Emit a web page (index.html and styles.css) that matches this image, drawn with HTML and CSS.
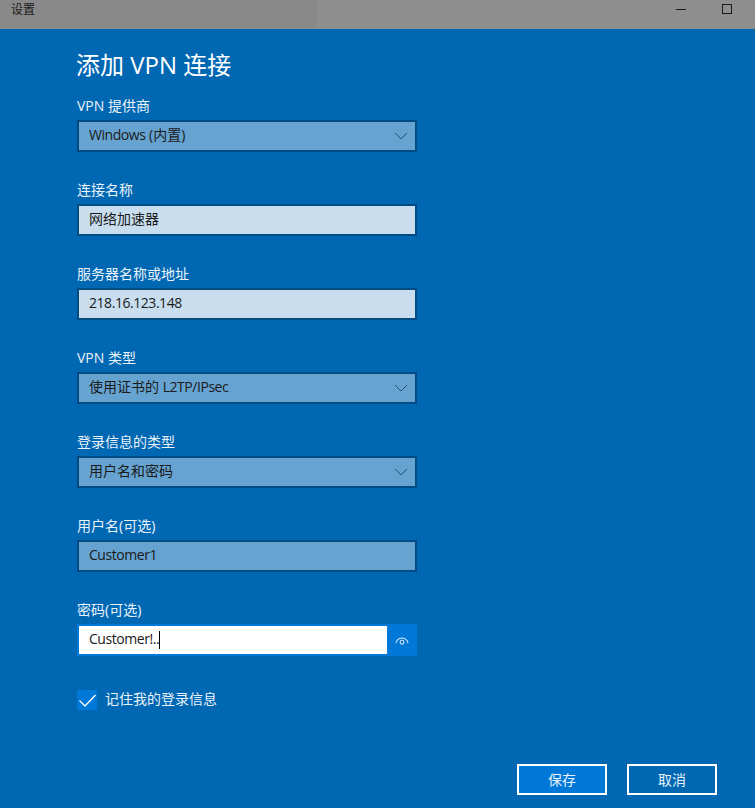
FILE: index.html
```html
<!DOCTYPE html>
<html lang="zh-CN">
<head>
<meta charset="utf-8">
<title>设置</title>
<link rel="stylesheet" href="styles.css">
</head>
<body>
<div class="window">
  <header class="titlebar">
    <div class="titlebar-left">设置</div>
    <div class="titlebar-controls">
      <span class="ctl"><svg width="10" height="10" viewBox="0 0 10 10"><path d="M0 5.500h10" stroke="#1a1a1a" stroke-width="1" fill="none"/></svg></span>
      <span class="ctl"><svg width="10" height="10" viewBox="0 0 10 10"><rect x=".5" y=".5" width="9" height="9" stroke="#1a1a1a" stroke-width="1" fill="none"/></svg></span>
    </div>
  </header>
  <main class="content">
    <h1 class="title">添加 VPN 连接</h1>
    <div class="field">
      <div class="label">VPN 提供商</div>
      <div class="box mid select"><span><span class="tight">Windows</span> (内置)</span><svg class="chev" width="14" height="8" viewBox="0 0 14 8"><path d="M1 1l6 6 6-6" stroke="#2b4f6e" stroke-width="1" fill="none"/></svg></div>
    </div>
    <div class="field">
      <div class="label">连接名称</div>
      <div class="box light"><span>网络加速器</span></div>
    </div>
    <div class="field">
      <div class="label">服务器名称或地址</div>
      <div class="box light"><span class="tight">218.16.123.148</span></div>
    </div>
    <div class="field">
      <div class="label">VPN 类型</div>
      <div class="box mid select"><span>使用证书的 <span class="tight">L2TP/IPsec</span></span><svg class="chev" width="14" height="8" viewBox="0 0 14 8"><path d="M1 1l6 6 6-6" stroke="#2b4f6e" stroke-width="1" fill="none"/></svg></div>
    </div>
    <div class="field">
      <div class="label">登录信息的类型</div>
      <div class="box mid select"><span>用户名和密码</span><svg class="chev" width="14" height="8" viewBox="0 0 14 8"><path d="M1 1l6 6 6-6" stroke="#2b4f6e" stroke-width="1" fill="none"/></svg></div>
    </div>
    <div class="field">
      <div class="label">用户名(可选)</div>
      <div class="box mid"><span class="tight">Customer1</span></div>
    </div>
    <div class="field">
      <div class="label">密码(可选)</div>
      <div class="password">
        <div class="password-input"><span class="tight">Customer!..</span><i class="caret"></i></div>
        <div class="reveal"><svg width="14" height="10" viewBox="0 0 14 10"><path d="M1 8.200A6.600 6.600 0 0 1 7 3a6.600 6.600 0 0 1 6 5.200" stroke="#cfe4f7" stroke-width="1.100" fill="none"/><circle cx="7" cy="7.200" r="1.900" stroke="#cfe4f7" stroke-width="1.100" fill="none"/></svg></div>
      </div>
    </div>
    <label class="check">
      <span class="checkbox"><svg width="20" height="20" viewBox="0 0 20 20"><path d="M2.500 10.500l5.500 5.500 10.500-11" stroke="#fff" stroke-width="1.300" fill="none"/></svg></span>
      <span class="check-text">记住我的登录信息</span>
    </label>
    <footer class="actions">
      <div class="btn primary">保存</div>
      <div class="btn">取消</div>
    </footer>
  </main>
</div>
</body>
</html>
```
FILE: styles.css
```css
* { box-sizing: border-box; }
html, body { margin: 0; padding: 0; }
body {
  width: 755px;
  height: 808px;
  overflow: hidden;
  background: #0067b3;
  font-family: "Open Sans", "Noto Sans CJK SC", sans-serif;
  font-size: 14px;
  color: #1a1a1a;
}
.window { display: flex; flex-direction: column; height: 808px; }
.titlebar { display: flex; height: 29px; background: #8e8e8e; flex: none; }
.titlebar-left {
  width: 317px;
  background: #898989;
  padding: 1px 0 0 11px;
  font-size: 12px;
  line-height: 18px;
  color: #1a1a1a;
}
.titlebar-controls { margin-left: auto; display: flex; gap: 36px; padding: 4px 23px 0 0; }
.ctl { width: 10px; height: 10px; display: block; }
.ctl svg { display: block; }
.content { padding: 0 0 0 77px; display: flex; flex-direction: column; flex: 1; }
.title {
  margin: 18px 0 0 -1px;
  font-size: 24px;
  font-weight: 400;
  line-height: 36px;
  color: #fff;
  height: 47px;
}
.field { display: flex; flex-direction: column; height: 84px; flex: none; }
.label { color: #eaf3fa; font-size: 14px; line-height: 20px; height: 26px; padding-top: 2px; }
.box {
  width: 340px;
  height: 32px;
  border: 2px solid #004b82;
  display: flex;
  align-items: center;
  justify-content: space-between;
  padding: 0 7px 2px 10px;
  line-height: 20px;
}
.tight { letter-spacing: -0.45px; }
.mid { background: #66a3d1; }
.light { background: #c8deef; }
.chev { display: block; margin-top: 2px; }
.password { display: flex; width: 340px; height: 32px; }
.password-input {
  flex: 1;
  background: #fff;
  border: 2px solid #0078d7;
  border-right: 0;
  padding: 0 0 2px 10px;
  display: flex;
  align-items: center;
  line-height: 20px;
}
.caret { display: block; width: 1px; height: 18px; background: #000; margin-top: 2px; }
.reveal {
  width: 30px;
  background: #0078d7;
  display: flex;
  align-items: center;
  justify-content: center;
}
.check { display: flex; align-items: center; gap: 8px; margin-top: 8px; height: 20px; }
.checkbox { width: 20px; height: 20px; background: #0078d7; display: block; flex: none; }
.checkbox svg { display: block; }
.check-text { color: #eaf3fa; line-height: 20px; padding-bottom: 2px; }
.actions { display: flex; gap: 20px; margin-top: 54px; padding-left: 440px; }
.btn {
  width: 90px;
  height: 31px;
  border: 2px solid #fff;
  color: #e8f2fa;
  display: flex;
  align-items: center;
  justify-content: center;
  line-height: 20px;
}
.primary { background: #0078d7; }
```
